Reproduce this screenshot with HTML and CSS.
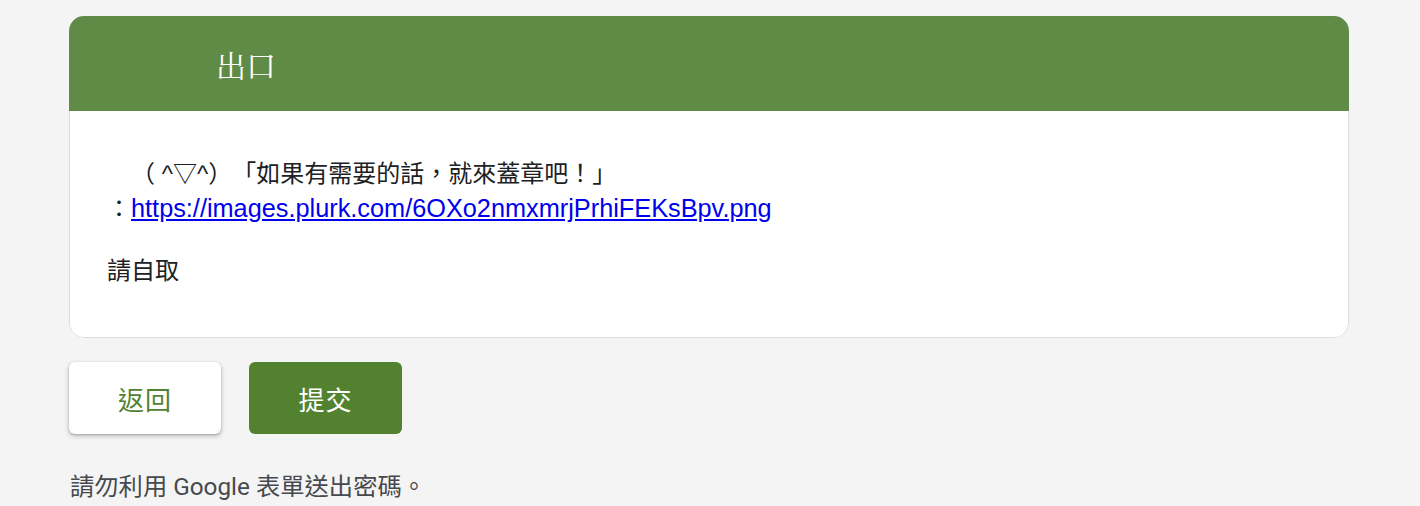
FILE: index.html
```html
<!DOCTYPE html>
<html lang="zh-Hant">
<head>
<meta charset="utf-8">
<title>出口</title>
<link rel="stylesheet" href="styles.css">
</head>
<body>
<main class="page">
  <section class="card">
    <header class="card-head">
      <h1 class="card-title">出口</h1>
    </header>
    <div class="card-body">
      <p class="para">　（ ^▽^）「如果有需要的話，就來蓋章吧！」<br>：<a class="link" href="#">https://images.plurk.com/6OXo2nmxmrjPrhiFEKsBpv.png</a></p>
      <p class="para para-gap">請自取</p>
    </div>
  </section>
  <div class="actions">
    <button class="btn btn-back" type="button">返回</button>
    <button class="btn btn-submit" type="button">提交</button>
  </div>
  <p class="note">請勿利用 Google 表單送出密碼。</p>
</main>
</body>
</html>
```

FILE: styles.css
```css
html, body {
  margin: 0;
  padding: 0;
  background: #f4f4f4;
}

.page {
  width: 1280px;
  margin: 0 0 0 69px;
  padding-top: 16px;
  font-family: Roboto, "Noto Sans CJK TC", sans-serif;
}

.card {
  background: #ffffff;
  border-radius: 15px;
  overflow: hidden;
  box-sizing: border-box;
}

.card-head {
  background: #5f8b47;
  height: 95px;
  display: flex;
  align-items: center;
  padding-left: 147px;
}

.card-title {
  margin: 0;
  color: #ffffff;
  font-family: "Liberation Serif", "Noto Serif CJK TC", "Noto Sans CJK TC", serif;
  font-weight: 400;
  font-size: 30px;
  line-height: 1;
  padding-top: 6px;
}

.card-body {
  border: 1px solid #dadce0;
  border-top: none;
  border-radius: 0 0 15px 15px;
  padding: 46px 37px 49px;
  font-family: "Liberation Sans", "Noto Sans CJK TC", sans-serif;
  font-size: 24px;
  line-height: 34px;
  color: #202124;
  text-spacing-trim: space-all;
}

.para {
  margin: 0;
}

.para-gap {
  margin-top: 28px;
}

.link {
  color: #0000ee;
  font-size: 25.3px;
  text-decoration: underline;
  text-underline-offset: 2px;
}

.actions {
  display: flex;
  gap: 28px;
  margin-top: 24px;
}

.btn {
  width: 152px;
  height: 72px;
  border-radius: 6px;
  border: none;
  font-family: Roboto, "Noto Sans CJK TC", sans-serif;
  font-size: 26px;
  font-weight: 400;
  letter-spacing: 1px;
  cursor: pointer;
}

.btn-back {
  background: #ffffff;
  color: #52822f;
  box-shadow: 0 1px 2px rgba(60, 64, 67, 0.3), 0 2px 4px 1px rgba(60, 64, 67, 0.2);
}

.btn-submit {
  background: #52822f;
  color: #ffffff;
  width: 153px;
}

.note {
  margin: 36px 0 0 1px;
  font-family: Roboto, "Noto Sans CJK TC", sans-serif;
  font-size: 24.3px;
  line-height: 34px;
  color: #46494d;
}
```
